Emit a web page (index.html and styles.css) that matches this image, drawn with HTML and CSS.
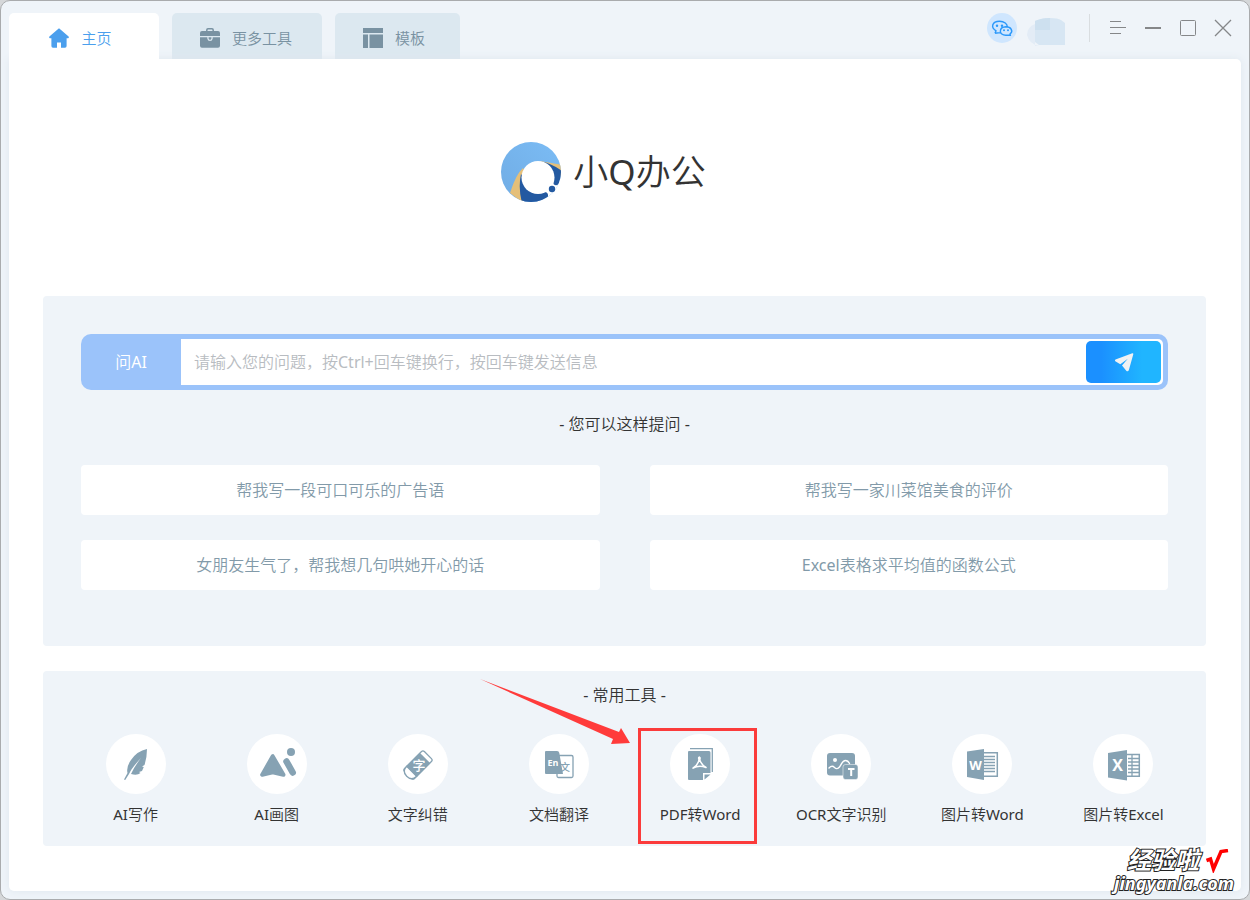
FILE: index.html
```html
<!DOCTYPE html>
<html lang="zh-CN">
<head>
<meta charset="utf-8">
<meta name="viewport" content="width=device-width, initial-scale=1">
<title>小Q办公</title>
<link rel="stylesheet" href="styles.css">
</head>
<body>
<div class="window">
  <header class="titlebar">
    <nav class="tabs">
      <a class="tab tab-active" href="#home">
        <svg class="tab-icon" viewBox="0 0 20 20"><path fill="currentColor" d="M10 0.2 0.4 8.6Q-.3 10.2 1 10.3H2.4V18Q2.4 19.8 4 19.8H8V14.5H12V19.8H16Q17.6 19.8 17.6 18V10.3H19Q20.3 10.2 19.6 8.6Z"/></svg>
        <span>主页</span>
      </a>
      <a class="tab" href="#tools">
        <svg class="tab-icon" viewBox="0 0 20 20"><path fill="none" stroke="currentColor" stroke-width="1.5" d="M6.8 4V2Q6.8.8 8 .8H12Q13.200 .8 13.2 2V4"/><path fill="currentColor" d="M2 3H18Q20 3 20 5V8H0V5Q0 3 2 3ZM0 9.200H7.300V10.500Q7.600 13 10 13Q12.400 13 12.700 10.500V9.200H20V17.800Q20 19.800 18 19.800H2Q0 19.800 0 17.800ZM8.600 9.200H11.400V10.500Q11.200 11.800 10 11.800Q8.800 11.800 8.600 10.500Z"/></svg>
        <span>更多工具</span>
      </a>
      <a class="tab tab-narrow" href="#templates">
        <svg class="tab-icon" viewBox="0 0 20 20"><path fill="currentColor" d="M0 0H20V5H0ZM0 6.500H5V20H0ZM6.500 6.500H20V20H6.500Z"/></svg>
        <span>模板</span>
      </a>
    </nav>
    <div class="controls">
      <button class="wechat" type="button" aria-label="微信">
        <svg viewBox="0 0 30 30" fill="none" stroke="#2b98fa" stroke-width="1.400"><path d="M8 20.200 9 17.800C3.400 14.500 5 8.300 12.500 8.300C17.500 8.300 20.300 11 20.300 13.800M8 20.200 13.300 19.600M19 13.800C11.500 14 11.500 22.500 19 22.300L23.300 22.300 23 21C26.700 18 24 13.800 19 13.800Z"/><g fill="#2b98fa" stroke="none"><circle cx="10" cy="12.700" r="1.200"/><circle cx="15" cy="12.700" r="1.200"/><circle cx="17" cy="17.300" r="1"/><circle cx="21" cy="17.300" r="1"/></g></svg>
      </button>
      <button class="avatar" type="button" aria-label="账户">
        <svg viewBox="0 0 40 34"><path fill="#e3ecf6" d="M8 6Q0 9 0 17Q2 26 12 28H8Z"/><path fill="#d7e6f3" d="M11 2Q16 0 23 0Q31 0 34 2L38 5V27H12L8 24V3Z"/><path fill="#cde0ef" d="M8 3Q14 0 23 0V12H8Z"/></svg>
      </button>
      <span class="divider"></span>
      <button class="control" type="button" aria-label="菜单"><svg viewBox="0 0 16 16"><path d="M0 1.500H11M0 7.500H16M0 13.500H11"/></svg></button>
      <button class="control" type="button" aria-label="最小化"><svg viewBox="0 0 16 16"><path stroke-width="2" d="M0 8H16"/></svg></button>
      <button class="control" type="button" aria-label="最大化"><svg viewBox="0 0 16 16"><rect x=".5" y=".5" width="15" height="15" rx="1"/></svg></button>
      <button class="control" type="button" aria-label="关闭"><svg viewBox="0 0 16 16"><path stroke-width="1.300" d="M0 0 16 16M16 0 0 16"/></svg></button>
    </div>
  </header>

  <main class="panel">
    <h1 class="brand">
      <svg class="brand-mark" viewBox="0 0 60 60">
        <defs>
          <clipPath id="disc"><circle cx="30" cy="30" r="30"/></clipPath>
          <linearGradient id="sky" x1="1" y1="0" x2="0" y2="1"><stop offset="0" stop-color="#7bbcf5"/><stop offset="1" stop-color="#70ace4"/></linearGradient>
        </defs>
        <g clip-path="url(#disc)">
          <rect width="60" height="60" fill="url(#sky)"/>
          <path fill="#fff" d="M37 36 62 29V62H40Z"/>
          <path fill="#e5bf78" d="M22 26Q15 32 9 51L22 61 30 40ZM39 19 61 23V34L50 30Z"/>
          <path fill="#2359a1" d="M20 32Q17 46 21 61H33Q44 58 47 54.500Q47.500 50 43.500 50L30 45Z"/>
          <path fill="#2359a1" d="M40 19.500Q50 21 61 29V31Q59 39 57.500 42Q55 44.500 52.500 42L50 30Z"/>
          <circle cx="37" cy="35.500" r="16.500" fill="#fff"/>
        </g>
        <circle cx="51" cy="47" r="3.200" fill="#2359a1"/>
      </svg>
      <span>小Q办公</span>
    </h1>

    <section class="card ask">
      <form class="ask-bar">
        <label class="ask-label" for="question">问AI</label>
        <div class="ask-field">
          <input class="ask-input" id="question" type="text" placeholder="请输入您的问题，按Ctrl+回车键换行，按回车键发送信息">
          <button class="send" type="button" aria-label="发送"><svg viewBox="0 0 20 20"><path fill="#f0f2f3" d="M18.300 1.200Q19.500 1 19.300 2.200L14.800 18.300Q14 19.800 12.500 19L8 13.500 13.800 6.800 6.300 12.200 1.300 9.200Q.4 8.300 1.500 7.500Z"/></svg></button>
        </div>
      </form>
      <h2 class="caption">- 您可以这样提问 -</h2>
      <div class="prompts">
        <button class="prompt" type="button">帮我写一段可口可乐的广告语</button>
        <button class="prompt" type="button">帮我写一家川菜馆美食的评价</button>
        <button class="prompt" type="button">女朋友生气了，帮我想几句哄她开心的话</button>
        <button class="prompt" type="button">Excel表格求平均值的函数公式</button>
      </div>
    </section>

    <section class="card toolbox">
      <h2 class="caption">- 常用工具 -</h2>
      <div class="tools">
        <a class="tool" href="#write">
          <span class="disc"><svg viewBox="0 0 60 60"><path fill="#86a2b3" d="M41 15Q31 17 25 26Q20 33 21.500 39L18 45.500 19.200 46 23 40Q25.500 34 35 24Q28 33 25 40Q31 42 34.500 39L33 38 36 37 37.800 33 36 32.500 38.500 31Q41 23 41 15Z"/></svg></span>
          <span>AI写作</span>
        </a>
        <a class="tool" href="#draw">
          <span class="disc"><svg viewBox="0 0 60 60"><g fill="#86a2b3" stroke="#86a2b3" stroke-linejoin="round"><path stroke-width="4" d="M25.700 22.200 15.200 40.800 25.700 38.200 36.500 40.800Z"/><path stroke="#fff" stroke-width="9" stroke-linecap="round" d="M39.500 27.500 45.700 38.500"/><path stroke-width="6.500" stroke-linecap="round" d="M39.500 27.500 45.700 38.500"/><circle cx="44" cy="18" r="4" stroke="none"/></g></svg></span>
          <span>AI画图</span>
        </a>
        <a class="tool" href="#proofread">
          <span class="disc"><svg viewBox="0 0 60 60"><g transform="rotate(-45 30 31)"><rect x="16" y="24" width="28" height="14" rx="2" fill="#fff" stroke="#86a2b3" stroke-width="1.300"/><path fill="#fff" stroke="#86a2b3" stroke-width="1.300" d="M21 24Q14 24 14 31Q14 38 21 38Z"/><path fill="#86a2b3" d="M21 23.500H40V38.500H21Z"/></g><text class="glyph-cjk" x="31" y="35.500" font-size="13" fill="#fff" text-anchor="middle">字</text></svg></span>
          <span>文字纠错</span>
        </a>
        <a class="tool" href="#translate">
          <span class="disc"><svg viewBox="0 0 60 60"><rect x="28" y="21.500" width="16" height="22" rx="1.500" fill="#fff" stroke="#86a2b3" stroke-width="1.300"/><text class="glyph-cjk" x="36" y="37" font-size="10" fill="#86a2b3" text-anchor="middle">文</text><path fill="#86a2b3" d="M17 17H28Q30 17 30.300 19L34 40H17Q16 40 16 39V18Q16 17 17 17Z"/><text class="glyph" x="24" y="32" font-size="9" fill="#fff" text-anchor="middle">En</text></svg></span>
          <span>文档翻译</span>
        </a>
        <a class="tool tool-marked" href="#pdf-word">
          <span class="disc"><svg viewBox="0 0 60 60"><path fill="none" stroke="#86a2b3" stroke-width="1.300" d="M20 14.700H42.300V38"/><path fill="#86a2b3" d="M19 17H39Q40.500 17 40.500 18.500V39H33V46H19Q18 46 18 45V18Q18 17 19 17ZM34.500 45.500V40.500H40.500Z"/><path fill="none" stroke="#fff" stroke-width="1.500" stroke-linecap="round" d="M29.300 23.300Q29.300 30 23 34.200M29.300 23.300Q29.700 29.500 36 33.500M23 34.200Q29 30.500 36 33.500"/><circle cx="29.300" cy="24" r="1.500" fill="#fff"/></svg></span>
          <span>PDF转Word</span>
          <svg class="pointer" viewBox="0 0 150 66" aria-hidden="true"><path fill="#ff3b3b" d="M0 0 139 53 141 49 150 64 131 65 133 60Z"/></svg>
        </a>
        <a class="tool" href="#ocr">
          <span class="disc"><svg viewBox="0 0 60 60"><rect x="16" y="19" width="28" height="22.500" rx="3" fill="#86a2b3"/><circle cx="24" cy="26" r="2" fill="#fff"/><path fill="none" stroke="#fff" stroke-width="1.400" stroke-linecap="round" d="M18 34Q21 31 23.500 33.500T28.500 33C31 30 31 26.500 34.500 26.500Q37 26.500 38.500 29.500"/><rect x="32" y="30.500" width="15" height="15" rx="2.500" fill="#86a2b3" stroke="#fff" stroke-width=".5"/><path fill="none" stroke="#fff" stroke-width="2" d="M37 35H43.500M40.200 35V42"/></svg></span>
          <span>OCR文字识别</span>
        </a>
        <a class="tool" href="#image-word">
          <span class="disc"><svg viewBox="0 0 60 60"><path fill="#fff" stroke="#86a2b3" stroke-width="1.500" d="M31 18.800H45.300V42.300H31Z"/><path stroke="#86a2b3" stroke-width="1.300" d="M31 22.500H43M31 25.500H43M31 28.500H43M31 31.500H43M31 34.500H43M31 37.500H43"/><path fill="#86a2b3" d="M15 17.500 32 15V46L15 43Z"/><text class="glyph" x="23.500" y="36" font-size="13" fill="#fff" text-anchor="middle">W</text></svg></span>
          <span>图片转Word</span>
        </a>
        <a class="tool" href="#image-excel">
          <span class="disc"><svg viewBox="0 0 60 60"><path fill="#fff" stroke="#86a2b3" stroke-width="1.500" d="M33 20.500H46.300V42.300H33Z"/><path stroke="#86a2b3" stroke-width="1.300" d="M35 24.500H46M35 28H46M35 31.500H46M35 35H46M35 38.500H46M39 21V42"/><path fill="#86a2b3" d="M15 19 34 16V46.500L15 43.500Z"/><text class="glyph" x="24.500" y="37" font-size="16" fill="#fff" text-anchor="middle">X</text></svg></span>
          <span>图片转Excel</span>
        </a>
      </div>
    </section>
  </main>

  <div class="watermark">
    <div class="watermark-top"><span>经验啦</span><svg viewBox="0 0 24 24"><path fill="none" stroke="#f00" stroke-width="3.500" d="M1.500 11.500 5.500 10 8.500 20 16 2.500 23 1.500"/></svg></div>
    <div class="watermark-site">jingyanla.com</div>
  </div>
</div>
</body>
</html>
```
FILE: styles.css
```css
* {
  box-sizing: border-box;
}

html {
  background: #d5d7d9;
}

body {
  margin: 0;
  color: #333;
  font-family: "Noto Sans", "Noto Sans CJK SC DemiLight", "Noto Sans CJK SC", sans-serif;
  font-size: 15px;
  line-height: 20px;
}

button,
input {
  margin: 0;
  padding: 0;
  border: 0;
  background: none;
  color: inherit;
  font: inherit;
}

a {
  color: inherit;
  text-decoration: none;
}

h1,
h2 {
  margin: 0;
  font-weight: 400;
}

.window {
  position: relative;
  display: flex;
  flex-direction: column;
  min-height: 100vh;
  padding: 12px 8px 8px;
  border: 1px solid #a9abad;
  border-radius: 10px;
  background: #eff4f9;
}

.titlebar {
  display: flex;
  justify-content: space-between;
}

.tabs {
  display: flex;
  gap: 13px;
}

.tab {
  display: flex;
  align-items: center;
  justify-content: center;
  gap: 12px;
  width: 150px;
  height: 46px;
  padding: 4px 2px 0 0;
  border-radius: 5px 5px 0 0;
  background: #dce8f0;
  color: #7992a2;
  font-weight: 350;
}

.tab-active {
  z-index: 1;
  padding-right: 7px;
  background: #fff;
  color: #4b9fed;
}

.tab-narrow {
  width: 125px;
  padding-right: 7px;
}

.tab-icon {
  width: 20px;
  height: 20px;
}

.controls {
  display: flex;
  align-items: center;
  height: 30px;
  padding-right: 10px;
}

.wechat {
  width: 30px;
  height: 30px;
  border-radius: 50%;
  background: #cfe6fe;
}

.wechat svg,
.avatar svg,
.control svg,
.pointer {
  display: block;
}

.avatar {
  width: 40px;
  height: 34px;
  margin: 14px 0 0 10px;
}

.divider {
  width: 1px;
  height: 28px;
  margin: 0 20px 0 22px;
  background: #d9dde0;
}

.control {
  width: 16px;
  margin-right: 19px;
}

.control:last-child {
  margin-right: 0;
}

.control svg {
  width: 16px;
  height: 16px;
  overflow: visible;
  fill: none;
  stroke: #858789;
}

.panel {
  flex: 1;
  padding: 83px 35px 45px 34px;
  border-radius: 0 5px 5px 5px;
  background: #fff;
  box-shadow: 0 0 8px #dfe7ee;
}

.brand {
  display: flex;
  align-items: center;
  justify-content: center;
  gap: 12px;
  height: 60px;
  margin-bottom: 94px;
  padding-right: 42px;
  font-size: 35px;
  line-height: 60px;
}

.brand-mark {
  width: 60px;
  height: 60px;
}

.card {
  border-radius: 4px;
  background: #eff4f9;
}

.ask {
  margin-bottom: 25px;
  padding: 38px 38px 56px;
}

.ask-bar {
  display: flex;
  height: 56px;
  padding: 5px 5px 5px 0;
  border-radius: 10px;
  background: #9bc3fa;
}

.ask-label {
  width: 100px;
  color: #fff;
  font-size: 16px;
  line-height: 46px;
  text-align: center;
}

.ask-field {
  display: flex;
  flex: 1;
  align-items: center;
  padding: 0 2px 0 13px;
  border-radius: 0 5px 5px 0;
  background: #fff;
}

.ask-input {
  flex: 1;
  min-width: 0;
  height: 46px;
  outline: 0;
  font-size: 16px;
}

.ask-input::placeholder {
  color: #b8bcc1;
  opacity: 1;
}

.send {
  display: flex;
  align-items: center;
  justify-content: center;
  width: 75px;
  height: 42px;
  border-radius: 5px;
  background: linear-gradient(90deg, #1b90ff 20%, #20b5ff 75%);
}

.send svg {
  width: 20px;
  height: 20px;
}

.caption {
  font-size: 16px;
  line-height: 24px;
  text-align: center;
}

.ask .caption {
  margin: 22px 0 29px;
}

.prompts {
  display: grid;
  grid-template-columns: 1fr 1fr;
  gap: 25px 50px;
}

.prompt {
  height: 50px;
  border-radius: 4px;
  background: #fff;
  color: #829aa9;
  font-size: 16px;
}

.toolbox {
  padding: 12px 12px 22px 22px;
}

.toolbox .caption {
  padding-right: 10px;
}

.tools {
  display: grid;
  grid-template-columns: repeat(8, 1fr);
  margin-top: 27px;
}

.tool {
  position: relative;
  display: flex;
  flex-direction: column;
  align-items: center;
  gap: 10px;
  white-space: nowrap;
}

.disc {
  width: 60px;
  height: 60px;
  border-radius: 50%;
  background: #fff;
}

.disc svg {
  display: block;
}

.glyph {
  font-family: "Open Sans", sans-serif;
  font-weight: 700;
}

.glyph-cjk {
  font-family: "Noto Sans CJK SC", sans-serif;
  font-weight: 500;
}

.tool-marked::after {
  position: absolute;
  inset: -6px 14px -20px 8px;
  border: 3px solid #fb3b3b;
  content: "";
}

.pointer {
  position: absolute;
  top: -55px;
  right: 100%;
  width: 150px;
  height: 66px;
}

.watermark {
  position: absolute;
  right: 15px;
  bottom: 6px;
  color: #fff;
  font-style: italic;
  font-weight: 700;
  -webkit-text-stroke: 2px #222;
  paint-order: stroke fill;
}

.watermark-top {
  display: flex;
  align-items: center;
  justify-content: flex-end;
  gap: 6px;
  padding-right: 5px;
  font-family: "Liberation Sans", "Noto Sans CJK SC", sans-serif;
  font-size: 24px;
  line-height: 24px;
}

.watermark-top svg {
  width: 24px;
  height: 24px;
}

.watermark-site {
  font-family: "Noto Sans", sans-serif;
  font-size: 18px;
  line-height: 20px;
}
```
